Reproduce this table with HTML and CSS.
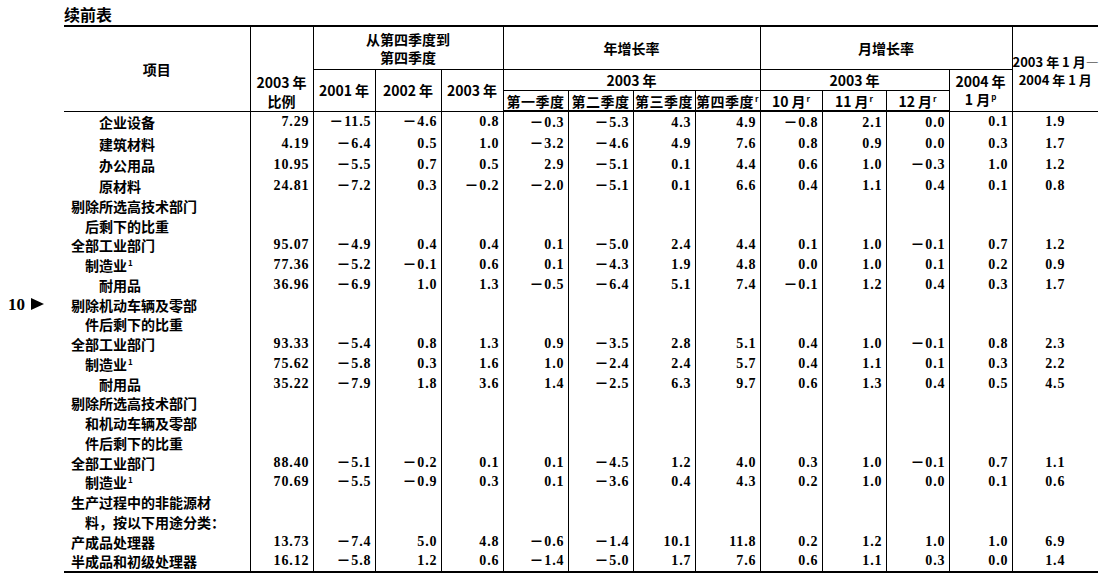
FILE: index.html
```html
<!DOCTYPE html>
<html lang="zh-CN">
<head>
<meta charset="utf-8">
<title>续前表</title>
<link rel="stylesheet" href="styles.css">
</head>
<body>
<div class="page">
  <div class="title">续前表</div>
  <table class="tbl">
    <colgroup>
      <col class="c-item"><col class="c-ratio"><col class="c62"><col class="c66"><col class="c62">
      <col class="c65"><col class="c65"><col class="c62"><col class="c65">
      <col class="c62"><col class="c64"><col class="c63"><col class="c63"><col class="c-last">
    </colgroup>
    <thead>
      <tr class="h1">
        <th rowspan="3" class="first">项目</th>
        <th rowspan="3" class="ratio-h">2003 年<br>比例</th>
        <th colspan="3">从第四季度到<br>第四季度</th>
        <th colspan="4">年增长率</th>
        <th colspan="4">月增长率</th>
        <th rowspan="3" class="last last-h">2003 年 1 月—<br>2004 年 1 月</th>
      </tr>
      <tr class="h2">
        <th rowspan="2">2001 年</th>
        <th rowspan="2">2002 年</th>
        <th rowspan="2">2003 年</th>
        <th colspan="4">2003 年</th>
        <th colspan="3">2003 年</th>
        <th rowspan="2">2004 年<br>1 月<sup>p</sup></th>
      </tr>
      <tr class="h3">
        <th class="q">第一季度</th>
        <th class="q">第二季度</th>
        <th class="q">第三季度</th>
        <th class="q">第四季度<sup>r</sup></th>
        <th>10 月<sup>r</sup></th>
        <th>11 月<sup>r</sup></th>
        <th>12 月<sup>r</sup></th>
      </tr>
    </thead>
    <tbody>
      <tr class="tall"><td class="item l2">企业设备</td><td>7.29</td><td>－11.5</td><td>－4.6</td><td>0.8</td><td>－0.3</td><td>－5.3</td><td>4.3</td><td>4.9</td><td>－0.8</td><td>2.1</td><td>0.0</td><td>0.1</td><td class="last">1.9</td></tr>
      <tr class="tall"><td class="item l2">建筑材料</td><td>4.19</td><td>－6.4</td><td>0.5</td><td>1.0</td><td>－3.2</td><td>－4.6</td><td>4.9</td><td>7.6</td><td>0.8</td><td>0.9</td><td>0.0</td><td>0.3</td><td class="last">1.7</td></tr>
      <tr class="tall"><td class="item l2">办公用品</td><td>10.95</td><td>－5.5</td><td>0.7</td><td>0.5</td><td>2.9</td><td>－5.1</td><td>0.1</td><td>4.4</td><td>0.6</td><td>1.0</td><td>－0.3</td><td>1.0</td><td class="last">1.2</td></tr>
      <tr class="tall"><td class="item l2">原材料</td><td>24.81</td><td>－7.2</td><td>0.3</td><td>－0.2</td><td>－2.0</td><td>－5.1</td><td>0.1</td><td>6.6</td><td>0.4</td><td>1.1</td><td>0.4</td><td>0.1</td><td class="last">0.8</td></tr>
      <tr><td class="item">剔除所选高技术部门</td><td></td><td></td><td></td><td></td><td></td><td></td><td></td><td></td><td></td><td></td><td></td><td></td><td class="last"></td></tr>
      <tr><td class="item l1">后剩下的比重</td><td></td><td></td><td></td><td></td><td></td><td></td><td></td><td></td><td></td><td></td><td></td><td></td><td class="last"></td></tr>
      <tr><td class="item">全部工业部门</td><td>95.07</td><td>－4.9</td><td>0.4</td><td>0.4</td><td>0.1</td><td>－5.0</td><td>2.4</td><td>4.4</td><td>0.1</td><td>1.0</td><td>－0.1</td><td>0.7</td><td class="last">1.2</td></tr>
      <tr><td class="item l1">制造业<sup>1</sup></td><td>77.36</td><td>－5.2</td><td>－0.1</td><td>0.6</td><td>0.1</td><td>－4.3</td><td>1.9</td><td>4.8</td><td>0.0</td><td>1.0</td><td>0.1</td><td>0.2</td><td class="last">0.9</td></tr>
      <tr><td class="item l2">耐用品</td><td>36.96</td><td>－6.9</td><td>1.0</td><td>1.3</td><td>－0.5</td><td>－6.4</td><td>5.1</td><td>7.4</td><td>－0.1</td><td>1.2</td><td>0.4</td><td>0.3</td><td class="last">1.7</td></tr>
      <tr><td class="item marked"><span class="marker">10<svg class="tri" viewBox="0 0 13 12" width="13" height="12"><path d="M0 0 L13 6 L0 12 Z"/></svg></span>剔除机动车辆及零部</td><td></td><td></td><td></td><td></td><td></td><td></td><td></td><td></td><td></td><td></td><td></td><td></td><td class="last"></td></tr>
      <tr><td class="item l1">件后剩下的比重</td><td></td><td></td><td></td><td></td><td></td><td></td><td></td><td></td><td></td><td></td><td></td><td></td><td class="last"></td></tr>
      <tr><td class="item">全部工业部门</td><td>93.33</td><td>－5.4</td><td>0.8</td><td>1.3</td><td>0.9</td><td>－3.5</td><td>2.8</td><td>5.1</td><td>0.4</td><td>1.0</td><td>－0.1</td><td>0.8</td><td class="last">2.3</td></tr>
      <tr><td class="item l1">制造业<sup>1</sup></td><td>75.62</td><td>－5.8</td><td>0.3</td><td>1.6</td><td>1.0</td><td>－2.4</td><td>2.4</td><td>5.7</td><td>0.4</td><td>1.1</td><td>0.1</td><td>0.3</td><td class="last">2.2</td></tr>
      <tr><td class="item l2">耐用品</td><td>35.22</td><td>－7.9</td><td>1.8</td><td>3.6</td><td>1.4</td><td>－2.5</td><td>6.3</td><td>9.7</td><td>0.6</td><td>1.3</td><td>0.4</td><td>0.5</td><td class="last">4.5</td></tr>
      <tr><td class="item">剔除所选高技术部门</td><td></td><td></td><td></td><td></td><td></td><td></td><td></td><td></td><td></td><td></td><td></td><td></td><td class="last"></td></tr>
      <tr><td class="item l1">和机动车辆及零部</td><td></td><td></td><td></td><td></td><td></td><td></td><td></td><td></td><td></td><td></td><td></td><td></td><td class="last"></td></tr>
      <tr><td class="item l1">件后剩下的比重</td><td></td><td></td><td></td><td></td><td></td><td></td><td></td><td></td><td></td><td></td><td></td><td></td><td class="last"></td></tr>
      <tr><td class="item">全部工业部门</td><td>88.40</td><td>－5.1</td><td>－0.2</td><td>0.1</td><td>0.1</td><td>－4.5</td><td>1.2</td><td>4.0</td><td>0.3</td><td>1.0</td><td>－0.1</td><td>0.7</td><td class="last">1.1</td></tr>
      <tr><td class="item l1">制造业<sup>1</sup></td><td>70.69</td><td>－5.5</td><td>－0.9</td><td>0.3</td><td>0.1</td><td>－3.6</td><td>0.4</td><td>4.3</td><td>0.2</td><td>1.0</td><td>0.0</td><td>0.1</td><td class="last">0.6</td></tr>
      <tr><td class="item">生产过程中的非能源材</td><td></td><td></td><td></td><td></td><td></td><td></td><td></td><td></td><td></td><td></td><td></td><td></td><td class="last"></td></tr>
      <tr><td class="item l1">料，按以下用途分类：</td><td></td><td></td><td></td><td></td><td></td><td></td><td></td><td></td><td></td><td></td><td></td><td></td><td class="last"></td></tr>
      <tr><td class="item">产成品处理器</td><td>13.73</td><td>－7.4</td><td>5.0</td><td>4.8</td><td>－0.6</td><td>－1.4</td><td>10.1</td><td>11.8</td><td>0.2</td><td>1.2</td><td>1.0</td><td>1.0</td><td class="last">6.9</td></tr>
      <tr><td class="item">半成品和初级处理器</td><td>16.12</td><td>－5.8</td><td>1.2</td><td>0.6</td><td>－1.4</td><td>－5.0</td><td>1.7</td><td>7.6</td><td>0.6</td><td>1.1</td><td>0.3</td><td>0.0</td><td class="last">1.4</td></tr>
    </tbody>
  </table>
</div>
</body>
</html>
```

FILE: styles.css
```css
html, body {
  margin: 0;
  padding: 0;
  background: #fff;
  color: #000;
}

.page {
  padding-top: 4px;
  font-family: "Noto Sans CJK SC", sans-serif;
}

.title {
  margin-left: 64px;
  font-size: 16px;
  font-weight: 700;
  line-height: 20px;
  height: 21px;
}

.tbl {
  margin-left: 64px;
  width: 1034px;
  table-layout: fixed;
  border-collapse: collapse;
  border-top: 2px solid #000;
  border-bottom: 2px solid #000;
}

.c-item { width: 186px; }
.c-ratio { width: 63px; }
.c62 { width: 62px; }
.c63 { width: 63px; }
.c64 { width: 64px; }
.c65 { width: 65px; }
.c66 { width: 66px; }
.c-last { width: 86px; }

th {
  border: 1px solid #000;
  font-family: "Noto Sans CJK SC", sans-serif;
  font-weight: 700;
  font-size: 14px;
  line-height: 18px;
  padding: 0;
  text-align: center;
  vertical-align: middle;
  white-space: nowrap;
}

th.first { border-left: none; }
th.last { border-right: none; }

.h1 th { height: 42px; }
.h2 th { height: 20px; }
.h3 th { height: 19px; border-bottom: 2px solid #000; }
.h3 th.q { letter-spacing: 0.5px; }

th.ratio-h {
  vertical-align: bottom;
  padding-bottom: 0;
  line-height: 19px;
}

th.last-h {
  font-size: 13px;
  line-height: 18px;
  padding-top: 4px;
}

th sup, td sup {
  font-size: 8px;
  line-height: 0;
  vertical-align: 5px;
  margin-left: 1px;
  font-weight: 700;
}

td {
  border-left: 1px solid #000;
  border-right: 1px solid #000;
  padding: 0 3px 0 0;
  height: 19.75px;
  line-height: 18px;
  text-align: right;
  vertical-align: middle;
  font-family: "Liberation Serif", "Noto Sans CJK SC", serif;
  font-weight: 700;
  font-size: 14px;
  letter-spacing: 0.9px;
  white-space: nowrap;
}

tr.tall td { height: 21px; }

td.item {
  border-left: none;
  text-align: left;
  padding: 0 0 0 7px;
  font-family: "Noto Sans CJK SC", sans-serif;
  font-size: 14px;
  letter-spacing: 0;
}

td.l1 { padding-left: 21px; }
td.l2 { padding-left: 35px; }

td.last {
  border-right: none;
  text-align: center;
  padding: 0;
}

td.marked { position: relative; }

.marker {
  position: absolute;
  left: -56px;
  top: 0;
  font-family: "Liberation Serif", serif;
  font-size: 17px;
  font-weight: 700;
  line-height: 19px;
  display: flex;
  align-items: center;
  gap: 6px;
}

.tri { fill: #000; }
```
